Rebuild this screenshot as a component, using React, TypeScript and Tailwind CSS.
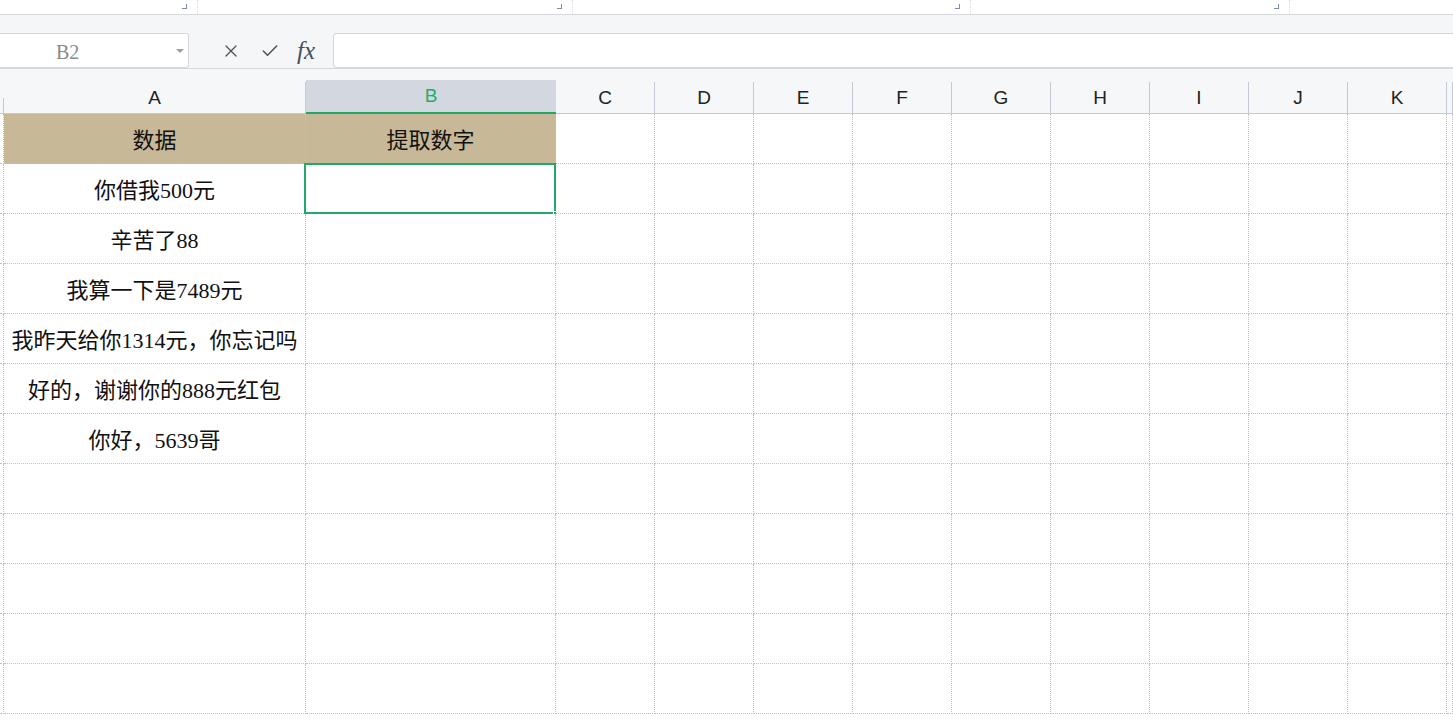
import { X, Check } from "lucide-react";

const COLS = ["A", "B", "C", "D", "E", "F", "G", "H", "I", "J", "K", ""];
const GRID = "grid grid-cols-[4px_302px_250px_repeat(9,99px)_1fr]";

const DATA = [
  ["数据", "提取数字"],
  ["你借我500元", ""],
  ["辛苦了88", ""],
  ["我算一下是7489元", ""],
  ["我昨天给你1314元，你忘记吗", ""],
  ["好的，谢谢你的888元红包", ""],
  ["你好，5639哥", ""],
  ["", ""],
  ["", ""],
  ["", ""],
  ["", ""],
  ["", ""],
];

const cellFont = "font-['Liberation_Serif','Noto_Sans_CJK_SC',serif]";

function RibbonSegment({ width }: { width: string }) {
  return (
    <div className={`${width} h-full flex items-end justify-end border-r border-dotted border-[#d8dbe6]`}>
      <div className="w-[5px] h-[5px] border-r border-b border-[#7f8aa6] mr-[10px] mb-[5px]" />
    </div>
  );
}

export default function App() {
  return (
    <div className="w-[1453px] h-[720px] overflow-hidden bg-white font-['Liberation_Sans',sans-serif]">
      {/* ribbon remnants */}
      <div className="h-[15px] flex bg-white border-b border-[#d5d8dc]">
        <RibbonSegment width="w-[198px]" />
        <RibbonSegment width="w-[375px]" />
        <RibbonSegment width="w-[398px]" />
        <RibbonSegment width="w-[319px]" />
        <div className="flex-1" />
      </div>
      <div className="h-[18px] bg-[#f5f6f8]" />

      {/* formula bar */}
      <div className="h-[36px] flex items-stretch bg-[#f5f6f8] border-b border-[#d5d8dc]">
        <div className="w-[189px] bg-white border border-[#d3d6da] border-l-0 rounded-r-[3px] flex items-center relative">
          <span className="pl-[56px] pt-[2px] text-[20px] text-[#8a8a8a] font-['Liberation_Serif',serif]">B2</span>
          <span className="absolute right-[4px] top-[15px] w-0 h-0 border-l-[4px] border-r-[4px] border-t-[4px] border-l-transparent border-r-transparent border-t-[#9aa0a6]" />
        </div>
        <div className="w-[144px] flex items-center text-[#4a4f58]">
          <X size={20} strokeWidth={1.5} className="ml-[32px]" />
          <Check size={20} strokeWidth={1.8} className="ml-[19px]" />
          <span className="ml-[17px] italic text-[25px] font-['Liberation_Serif',serif] leading-none">fx</span>
        </div>
        <div className="flex-1 bg-white border border-[#d3d6da] border-r-0 rounded-l-[4px]" />
      </div>
      <div className="h-[11px] bg-[#f6f7f9]" />

      {/* column headers */}
      <div className={`${GRID} h-[34px] bg-[#f6f7f9] border-b border-[#c4c9d6]`}>
        <div className="border-r border-[#c4c9d6] mt-[18px]" />
        {COLS.map((c, i) => (
          <div
            key={i}
            className={`flex items-center justify-center pt-[1px] text-[19px] ${
              c === "B"
                ? "bg-[#d3d7df] text-[#22ad6e] border-b-2 border-[#1fa866] -mb-[1px]"
                : "text-[#222] border-r border-[#c4c9d6] mt-[2px]"
            }`}
          >
            {c}
          </div>
        ))}
      </div>

      {/* rows */}
      {DATA.map((row, r) => (
        <div key={r} className={`${GRID} h-[50px]`}>
          <div className="border-r border-[#b8c0d6] border-b border-dotted" />
          {COLS.map((c, i) => {
            const text = i === 0 ? row[0] : i === 1 ? row[1] : "";
            const header = r === 0 && i < 2;
            const selected = r === 1 && i === 1;
            return (
              <div
                key={i}
                className={`relative flex items-center justify-center pt-[3px] text-[22px] text-[#111] whitespace-nowrap border-r border-b border-dotted border-[#b8c0d6] ${cellFont} ${
                  header ? "bg-[#c7b897]" : "bg-white"
                }`}
              >
                {text}
                {selected && (
                  <>
                    <div className="absolute -left-[2px] -top-[1px] -right-[1px] -bottom-[1px] border-2 border-[#22a86a]" />
                    <div className="absolute -right-[3px] -bottom-[3px] w-[5px] h-[5px] bg-[#22a86a] border border-white" />
                  </>
                )}
              </div>
            );
          })}
        </div>
      ))}
    </div>
  );
}
